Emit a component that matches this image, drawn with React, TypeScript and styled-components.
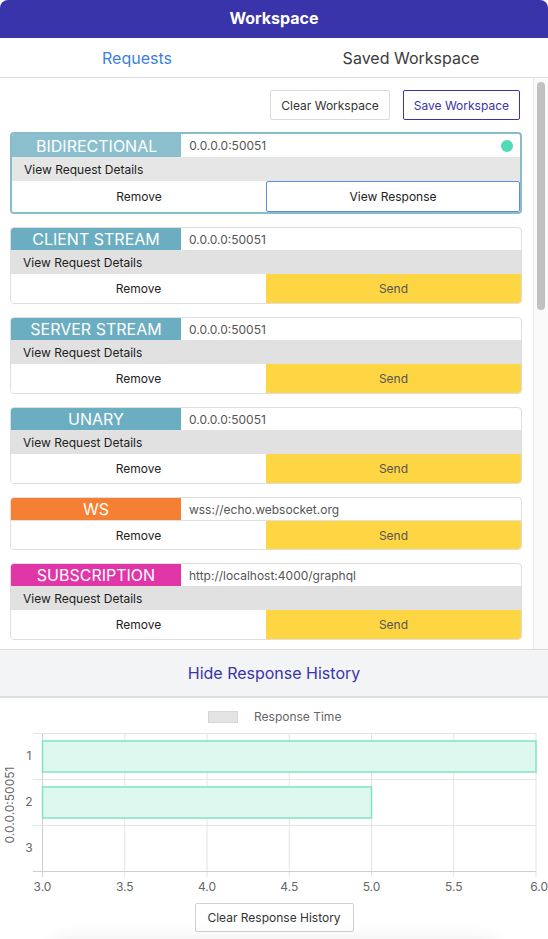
import React from "react";
import styled, { createGlobalStyle } from "styled-components";

const Global = createGlobalStyle`
  html, body { margin: 0; padding: 0; background: #fff; }
  body { font-family: Inter, "Noto Sans", "Liberation Sans", sans-serif; overflow: hidden; }
  * { box-sizing: border-box; }
`;

const Page = styled.div`
  width: 548px;
  height: 939px;
  display: flex;
  flex-direction: column;
  overflow: hidden;
`;

const Header = styled.div`
  height: 38px;
  flex: none;
  background: #3934a9;
  color: #fff;
  border-radius: 8px 8px 0 0;
  display: flex;
  align-items: center;
  justify-content: center;
  padding-bottom: 3px;
  font-size: 16px;
  font-weight: 700;
`;

const Tabs = styled.div`
  height: 40px;
  flex: none;
  display: grid;
  grid-template-columns: 1fr 1fr;
  border-bottom: 1px solid #dcdcdc;
`;

const Tab = styled.div<{ $active?: boolean }>`
  display: flex;
  align-items: center;
  justify-content: center;
  font-size: 16px;
  color: ${(p) => (p.$active ? "#3b7fdc" : "#3c3c3c")};
`;

const ScrollArea = styled.div`
  height: 572px;
  flex: none;
  display: flex;
  border-bottom: 1px solid #dcdcdc;
  overflow: hidden;
`;

const Content = styled.div`
  flex: 1;
  min-width: 0;
  overflow: hidden;
`;

const Track = styled.div`
  width: 15px;
  flex: none;
  background: #fafafa;
  border-left: 1px solid #e8e8e8;
  padding: 4px 2px 0 3px;
`;

const Thumb = styled.div`
  width: 8px;
  height: 228px;
  border-radius: 4px;
  background: #c1c1c1;
`;

const Toolbar = styled.div`
  display: flex;
  justify-content: flex-end;
  gap: 13px;
  padding: 12px 13px 12px 0;
`;

const ToolButton = styled.button<{ $primary?: boolean }>`
  height: 30px;
  padding: 0 10px;
  background: #fff;
  border: 1px solid ${(p) => (p.$primary ? "#3934a9" : "#dadada")};
  color: ${(p) => (p.$primary ? "#3934a9" : "#333")};
  border-radius: 2px;
  font-family: inherit;
  font-size: 12px;
`;

const Card = styled.div<{ $selected?: boolean }>`
  margin: 0 11px 13px 10px;
  border: ${(p) => (p.$selected ? "2px solid #88bccb" : "1px solid #dedede")};
  border-radius: 4px;
  background: #fff;
  overflow: hidden;
`;

const TopRow = styled.div<{ $h: number }>`
  display: flex;
  height: ${(p) => p.$h}px;
`;

const Label = styled.div<{ $bg: string }>`
  width: 33.33%;
  flex: none;
  background: ${(p) => p.$bg};
  color: #fff;
  font-size: 16px;
  display: flex;
  align-items: center;
  justify-content: center;
`;

const Url = styled.div`
  flex: 1;
  display: flex;
  align-items: center;
  justify-content: space-between;
  padding: 0 7px 0 8px;
  font-size: 12px;
  color: #555;
`;

const Dot = styled.span`
  width: 12px;
  height: 12px;
  border-radius: 50%;
  background: #4fdbb6;
`;

const Details = styled.div<{ $bg: string }>`
  height: 24px;
  background: ${(p) => p.$bg};
  display: flex;
  align-items: center;
  padding-left: 12px;
  font-size: 12px;
  color: #222;
`;

const Divider = styled.div`
  height: 1px;
  background: #e0e0e0;
`;

const Actions = styled.div<{ $h: number }>`
  display: grid;
  grid-template-columns: 1fr 1fr;
  height: ${(p) => p.$h}px;
`;

const ActionButton = styled.div<{ $variant?: "plain" | "send" | "outline" }>`
  display: flex;
  align-items: center;
  justify-content: center;
  font-size: 12px;
  color: ${(p) => (p.$variant === "send" ? "#555" : "#222")};
  background: ${(p) => (p.$variant === "send" ? "#fed643" : "#fff")};
  border: ${(p) => (p.$variant === "outline" ? "1px solid #5c8fdb" : "none")};
  border-radius: ${(p) => (p.$variant === "outline" ? "2px" : "0")};
`;

const HistoryBar = styled.div`
  height: 48px;
  flex: none;
  background: #f3f4f6;
  border-bottom: 2px solid #dedede;
  display: flex;
  align-items: center;
  justify-content: center;
  font-size: 16px;
  color: #3934a9;
`;

const ChartSection = styled.div`
  display: flex;
  flex-direction: column;
  align-items: center;
`;

const ChartSvg = styled.svg`
  display: block;
`;

const ClearButton = styled.button`
  margin-top: 5px;
  height: 29px;
  width: 159px;
  background: #fff;
  border: 1px solid #d2d2d2;
  border-radius: 2px;
  font-family: inherit;
  font-size: 12px;
  color: #333;
`;

const BottomShade = styled.div`
  margin-top: 10px;
  width: 440px;
  height: 20px;
  border-radius: 10px;
  box-shadow: 0 0 18px 4px rgba(0, 0, 0, 0.07);
`;

type Req = {
  type: string;
  color: string;
  url: string;
  details: boolean;
  selected?: boolean;
};

const requests: Req[] = [
  { type: "BIDIRECTIONAL", color: "#8bbfce", url: "0.0.0.0:50051", details: true, selected: true },
  { type: "CLIENT STREAM", color: "#6badc1", url: "0.0.0.0:50051", details: true },
  { type: "SERVER STREAM", color: "#6badc1", url: "0.0.0.0:50051", details: true },
  { type: "UNARY", color: "#6badc1", url: "0.0.0.0:50051", details: true },
  { type: "WS", color: "#f57f32", url: "wss://echo.websocket.org", details: false },
  { type: "SUBSCRIPTION", color: "#e036a8", url: "http://localhost:4000/graphql", details: true },
];

const RequestCard: React.FC<{ r: Req }> = ({ r }) => (
  <Card $selected={r.selected}>
    <TopRow $h={r.selected ? 23 : 22}>
      <Label $bg={r.color}>{r.type}</Label>
      <Url>
        <span>{r.url}</span>
        {r.selected && <Dot />}
      </Url>
    </TopRow>
    {r.details ? (
      <Details $bg={r.selected ? "#e6e6e6" : "#e1e1e1"}>View Request Details</Details>
    ) : (
      <Divider />
    )}
    <Actions $h={r.selected ? 31 : r.details ? 29 : 28}>
      <ActionButton $variant="plain">Remove</ActionButton>
      {r.selected ? (
        <ActionButton $variant="outline">View Response</ActionButton>
      ) : (
        <ActionButton $variant="send">Send</ActionButton>
      )}
    </Actions>
  </Card>
);

const X0 = 42.5;
const X1 = 536;
const xs = (v: number) => X0 + ((v - 3) / 3) * (X1 - X0);
const TOP = 35;
const CAT = 46;

const Chart: React.FC = () => {
  const ticks = [3, 3.5, 4, 4.5, 5, 5.5, 6];
  const bars = [6, 5];
  return (
    <ChartSvg width={548} height={200} viewBox="0 0 548 200">
      <rect x={208.5} y={13.5} width={29} height={11} fill="#e4e4e4" stroke="#d6d6d6" />
      <text x={254} y={23} fontSize={12} fill="#666" fontFamily="Inter, sans-serif">
        Response Time
      </text>
      {ticks.map((t) => (
        <line key={t} x1={xs(t)} x2={xs(t)} y1={TOP} y2={TOP + CAT * 3 + 6} stroke={t === 3 ? "#cfcfcf" : "#e3e3e3"} />
      ))}
      {[0, 1, 2, 3].map((i) => (
        <line
          key={i}
          x1={33}
          x2={X1}
          y1={TOP + i * CAT + 0.5}
          y2={TOP + i * CAT + 0.5}
          stroke={i === 3 ? "#cfcfcf" : "#e3e3e3"}
        />
      ))}
      {bars.map((v, i) => (
        <rect
          key={i}
          x={X0}
          y={TOP + i * CAT + 8}
          width={xs(v) - X0}
          height={31}
          fill="#def7ef"
          stroke="#80e3c4"
          strokeWidth={1.5}
        />
      ))}
      {["1", "2", "3"].map((l, i) => (
        <text
          key={l}
          x={29}
          y={TOP + i * CAT + CAT / 2 + 4}
          fontSize={12}
          fill="#666"
          textAnchor="middle"
          fontFamily="Inter, sans-serif"
        >
          {l}
        </text>
      ))}
      {ticks.map((t) => (
        <text
          key={t}
          x={xs(t)}
          y={193}
          fontSize={12}
          fill="#666"
          textAnchor={t === 6 ? "end" : "middle"}
          fontFamily="Inter, sans-serif"
          dx={t === 6 ? 12 : 0}
        >
          {t.toFixed(1)}
        </text>
      ))}
      <text
        x={0}
        y={0}
        transform="translate(14 107) rotate(-90)"
        fontSize={12}
        fill="#666"
        textAnchor="middle"
        fontFamily="Inter, sans-serif"
      >
        0.0.0.0:50051
      </text>
    </ChartSvg>
  );
};

export default function App() {
  return (
    <Page>
      <Global />
      <Header>Workspace</Header>
      <Tabs>
        <Tab $active>Requests</Tab>
        <Tab>Saved Workspace</Tab>
      </Tabs>
      <ScrollArea>
        <Content>
          <Toolbar>
            <ToolButton>Clear Workspace</ToolButton>
            <ToolButton $primary>Save Workspace</ToolButton>
          </Toolbar>
          {requests.map((r, i) => (
            <RequestCard key={i} r={r} />
          ))}
        </Content>
        <Track>
          <Thumb />
        </Track>
      </ScrollArea>
      <HistoryBar>Hide Response History</HistoryBar>
      <ChartSection>
        <Chart />
        <ClearButton>Clear Response History</ClearButton>
        <BottomShade />
      </ChartSection>
    </Page>
  );
}
